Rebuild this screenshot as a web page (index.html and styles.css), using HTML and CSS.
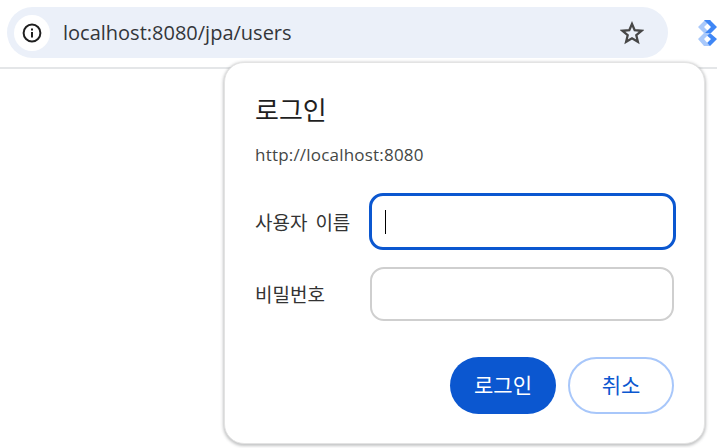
FILE: index.html
```html
<!DOCTYPE html>
<html>
    <head>
        <title>localhost:8080/jpa/users</title>
        <meta charset="UTF-8">
        <link rel="stylesheet" href="styles.css">
    </head>
    <body>
        <div class="toolbar">
            <div class="omnibox">
                <div class="site-info">
                    <svg width="20" height="20" viewBox="0 0 20 20">
                        <circle cx="10" cy="10" r="8.4" fill="none" stroke="#1f1f1f" stroke-width="2"/>
                        <rect x="9" y="9" width="2" height="5.5" fill="#1f1f1f"/>
                        <rect x="9" y="5.5" width="2" height="2" fill="#1f1f1f"/>
                    </svg>
                </div>
                <div class="url">localhost:8080/jpa/users</div>
                <svg class="star" width="24" height="24" viewBox="0 0 24 24">
                    <path d="M12 3l2.7 6.2 6.8.6-5.2 4.4 1.6 6.6-5.9-3.5-5.9 3.5 1.6-6.6-5.2-4.4 6.8-.6z" fill="none" stroke="#474747" stroke-width="2.3" stroke-linejoin="miter"/>
                </svg>
            </div>
            <svg class="extension" width="19" height="26" viewBox="0 0 19 26">
                <path d="M7 0h6l-7 7 6 6H6L0 7z" fill="#a9c9fb"/>
                <path d="M6 0h6l7 7-6 6H7l6-6z" fill="#3f86f5"/>
                <path d="M6 13h6l7 6-7 7H6l7-7z" fill="#3f86f5"/>
                <path d="M6 13L0 19l6 7h6l-6-7 6-6z" fill="#a9c9fb"/>
            </svg>
        </div>

        <div class="dialog">
            <h1>로그인</h1>
            <div class="origin">http://localhost:8080</div>
            <div class="form">
                <label class="field-label">사용자 이름</label>
                <div class="input focused"><span class="caret"></span></div>
                <label class="field-label">비밀번호</label>
                <div class="input"></div>
            </div>
            <div class="buttons">
                <button class="btn primary">로그인</button>
                <button class="btn secondary">취소</button>
            </div>
        </div>
    </body>
</html>
```

FILE: styles.css
```css
html, body {
    margin: 0;
    height: 100%;
    overflow: hidden;
    background-color: white;
    font-family: "Open Sans", "Noto Sans CJK KR", sans-serif;
}

.toolbar {
    height: 69px;
    box-sizing: border-box;
    padding: 7px 0 0 7px;
    display: flex;
    gap: 30px;
    align-items: flex-start;
    border-bottom: 2px solid #e4e6e8;
    overflow: hidden;
}

.omnibox {
    flex: none;
    width: 661px;
    height: 51px;
    box-sizing: border-box;
    padding: 0 24px 0 7px;
    display: flex;
    align-items: center;
    border-radius: 26px;
    background-color: #ebf0f9;
}

.site-info {
    width: 36px;
    height: 36px;
    flex: none;
    display: flex;
    align-items: center;
    justify-content: center;
    border-radius: 50%;
    background-color: white;
}

.url {
    flex: 1;
    margin-left: 13px;
    font-size: 20px;
    color: #333639;
}

.star {
    flex: none;
}

.extension {
    flex: none;
    margin-top: 13px;
}

.dialog {
    position: absolute;
    left: 224px;
    top: 62px;
    width: 481px;
    height: 382px;
    box-sizing: border-box;
    padding: 32px 30px 0 30px;
    border: 1px solid #e3e3e3;
    border-radius: 20px;
    background-color: white;
    box-shadow: 0 1px 3px 1px rgba(60, 64, 67, 0.3);
}

h1 {
    margin: 0;
    font-size: 26px;
    line-height: 30px;
    font-weight: normal;
    color: #1f1f1f;
}

.origin {
    margin-top: 19px;
    font-size: 17px;
    letter-spacing: 0.2px;
    line-height: 22px;
    color: #444746;
}

.form {
    margin-top: 28px;
    display: grid;
    grid-template-columns: 115px 304px;
    row-gap: 18px;
    align-items: center;
}

.field-label {
    font-size: 19px;
    word-spacing: 3px;
    color: #333;
}

.input {
    height: 54px;
    box-sizing: border-box;
    border: 2px solid #cfcfcf;
    border-radius: 14px;
    display: flex;
    align-items: center;
    padding-left: 13px;
}

.input.focused {
    width: 307px;
    height: 57px;
    margin: -1px;
    border: 3px solid #0b57d0;
}

.caret {
    width: 1px;
    height: 24px;
    background-color: black;
}

.buttons {
    margin-top: 36px;
    display: flex;
    justify-content: flex-end;
    gap: 12px;
}

.btn {
    width: 106px;
    height: 57px;
    border-radius: 29px;
    font-family: inherit;
    font-size: 21px;
    padding: 0 0 4px 0;
}

.primary {
    border: none;
    background-color: #0b57d0;
    color: white;
}

.secondary {
    border: 2px solid #a8c7fa;
    background-color: white;
    color: #0b57d0;
}
```
